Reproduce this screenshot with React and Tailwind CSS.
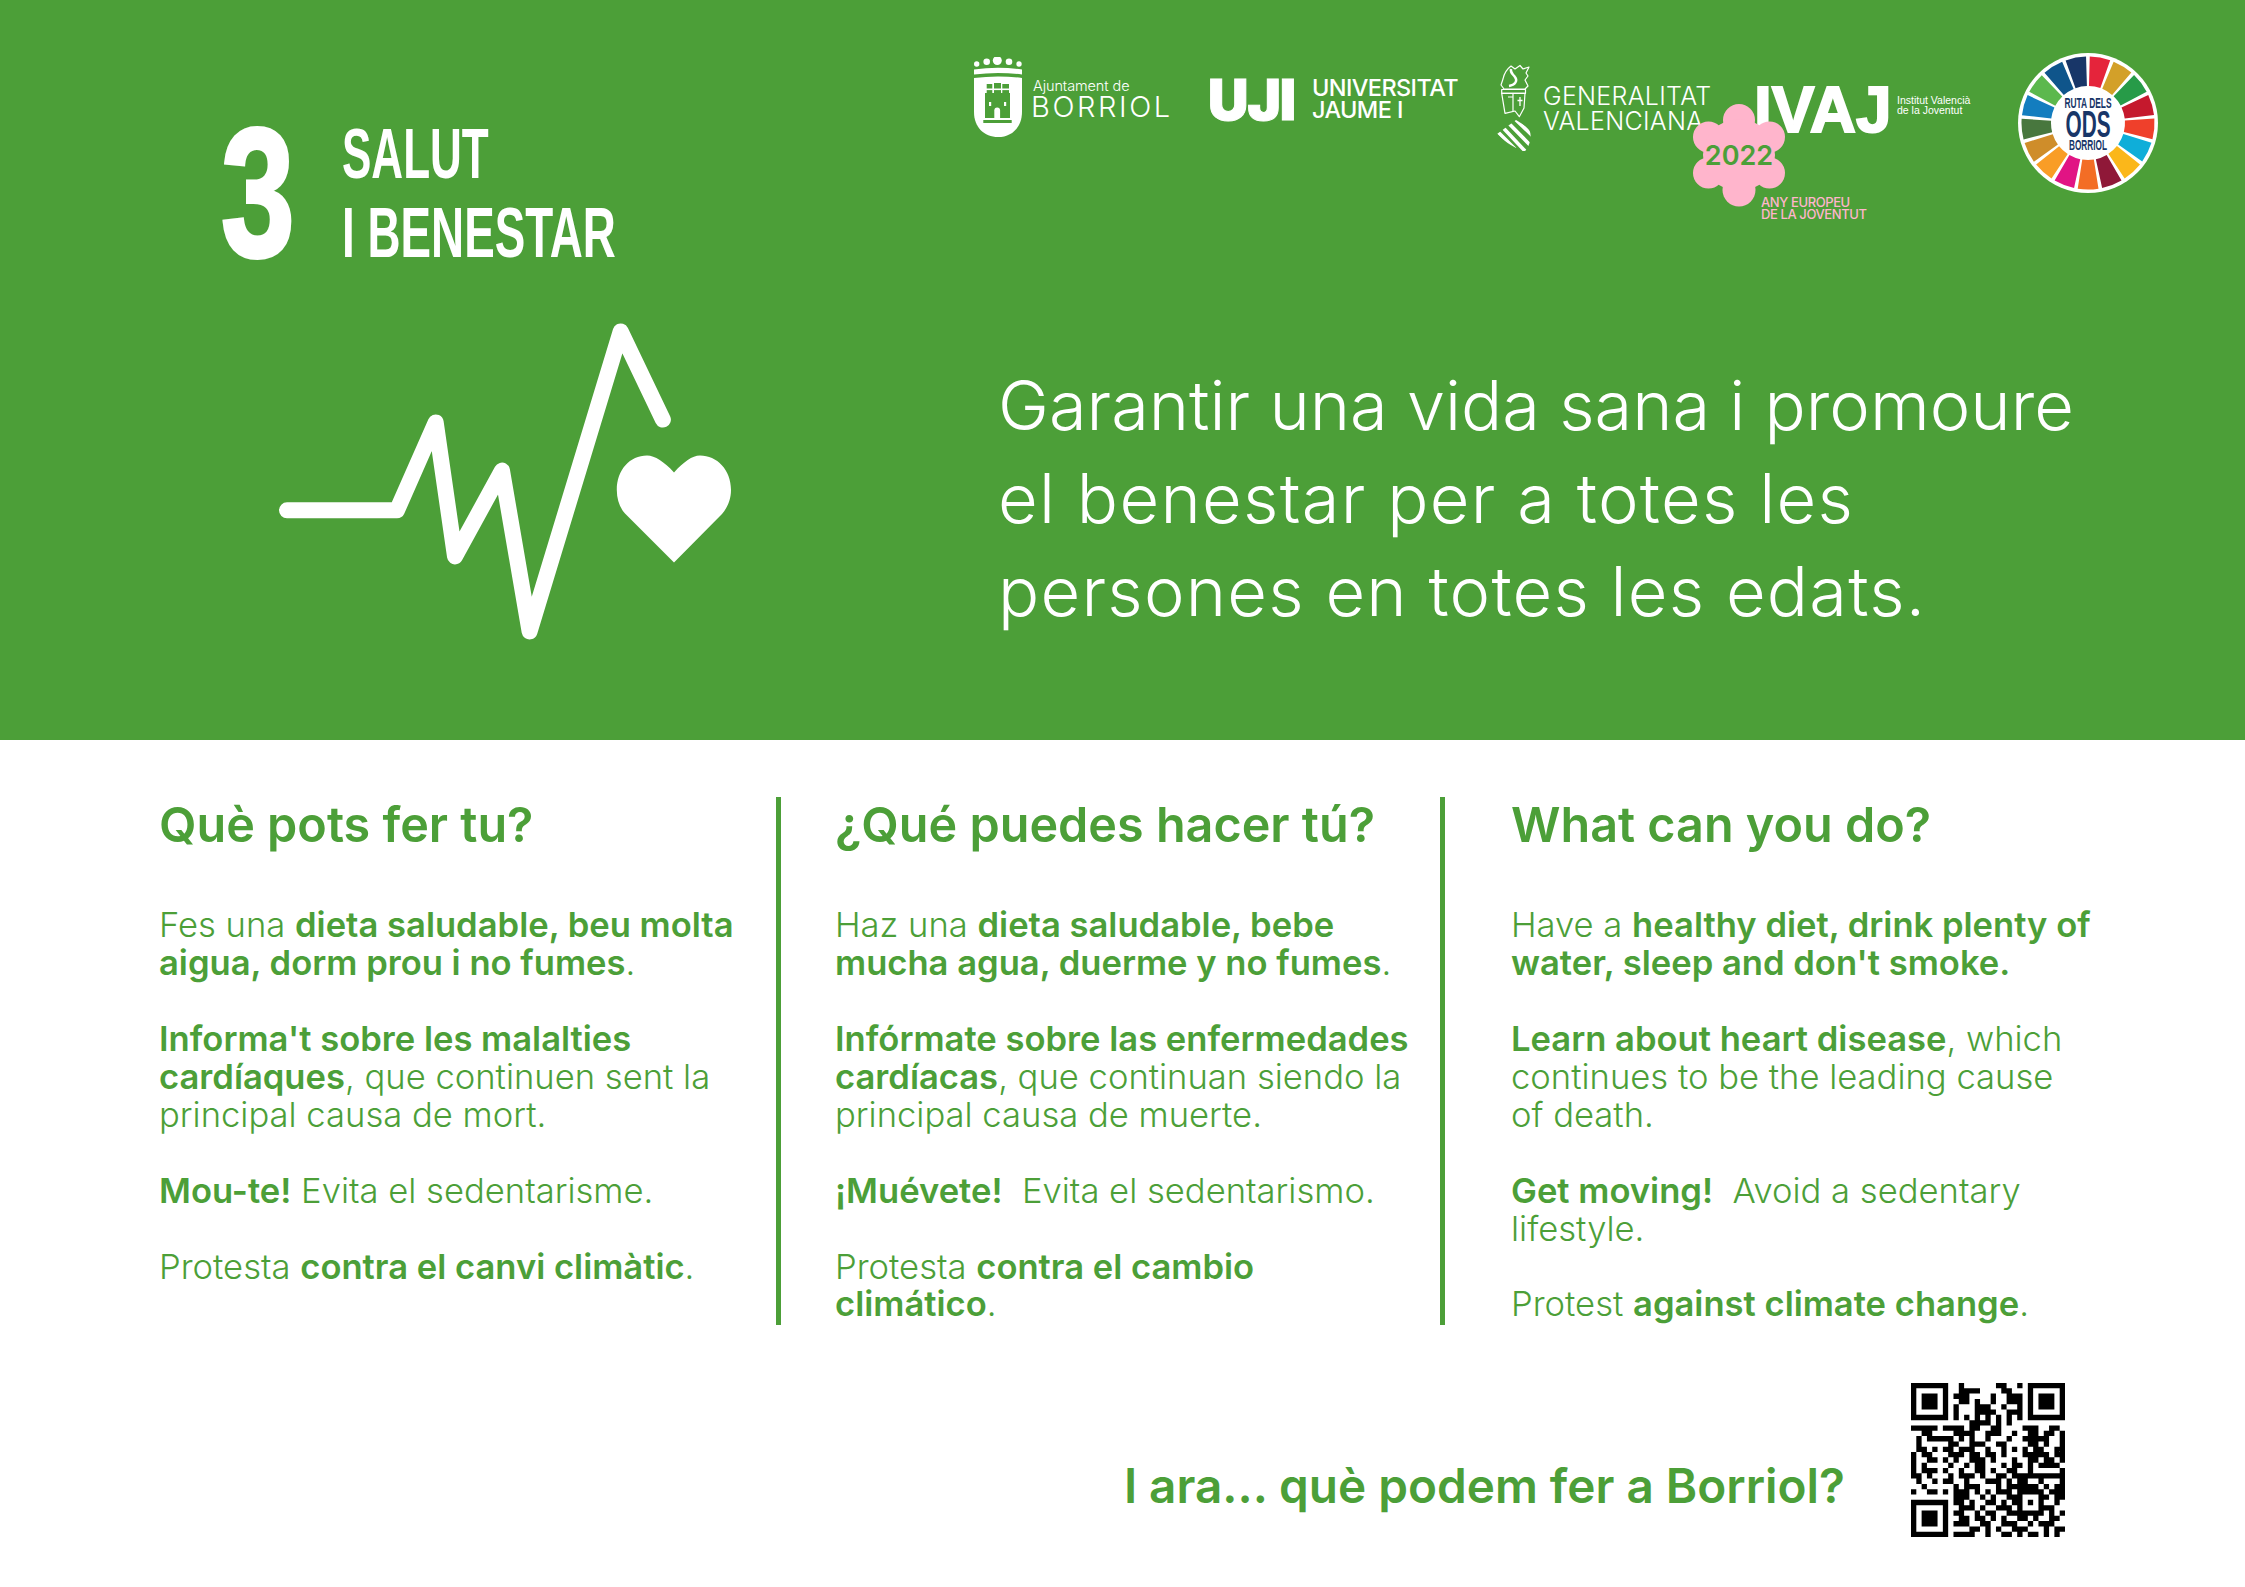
import React from 'react';

const SDG_COLORS = ['#E5243B', '#D3A029', '#279B48', '#C5192D', '#EF402B', '#0FAED9', '#FBB71A', '#8F1838', '#F36D25', '#E11484', '#F99D26', '#CF8D2A', '#48773E', '#137DBF', '#5CB84D', '#0F558B', '#183668'];

const segmentPath = (i) => {
    const cx = 70, cy = 70, r1 = 37, r2 = 66.5;
    const a0 = ((1.5 + (360 / 17) * i - 90) * Math.PI) / 180;
    const a1 = ((1.5 + (360 / 17) * i + 18 - 90) * Math.PI) / 180;
    const p = (r, a) => `${(cx + r * Math.cos(a)).toFixed(2)} ${(cy + r * Math.sin(a)).toFixed(2)}`;
    return `M${p(r1, a0)} L${p(r2, a0)} A${r2} ${r2} 0 0 1 ${p(r2, a1)} L${p(r1, a1)} A${r1} ${r1} 0 0 0 ${p(r1, a0)} Z`;
};

const QR_ROWS = [
    '1111111 0 0100000011001 0 1111111',
    '1000001 0 0111100001100 0 1000001',
    '1011101 0 1110000100111 0 1011101',
    '1011101 0 0110100100111 0 1011101',
    '1011101 0 1000111001001 0 1011101',
    '1000001 0 1000111100111 0 1000001',
    '1111111 0 1010101010101 0 1111111',
    '00000000 0001111010100 00000000',
    '11111 01111 01100 11000 01110 0110',
    '00110 00011 11001 11001 00110 1101',
    '01011 11101 01001 00010 01111 1001',
    '01000 00110 01110 01100 00110 1001',
    '01101 01101 11001 00101 01011 0011',
    '10110 00111 01101 10100 01111 1011',
    '10011 01010 01110 10001 00110 1101',
    '10100 00100 10110 00101 10101 1110',
    '10111 01001 00110 10011 00100 0001',
    '11010 00101 11010 01101 11111 1111',
    '01001 01100 10001 11010 11001 0001',
    '00100 00010 11100 01011 11110 1011',
    '10011 01011 10101 01110 11111 0111',
    '00000 00011 10010 10011 10001 1011',
    '11111 11011 01001 10101 10101 0010',
    '10000 01001 11010 01110 10001 1100',
    '10111 01011 00101 10011 11111 0101',
    '10111 01001 10110 10100 11010 0110',
    '10111 01011 10011 00111 00101 1100',
    '10000 01000 01101 01001 11000 1011',
    '11111 11011 11001 00110 10110 1010',
];

const qrPath = QR_ROWS.map((row, y) =>
    row.replace(/ /g, '').split('').map((c, x) => (c === '1' ? `M${x} ${y}h1v1h-1z` : '')).join('')
).join('');

const BorriolCrest = () => (
    <svg width="52" height="81" viewBox="0 0 52 81" className="shrink-0">
        <g fill="#fff">
            <circle cx="4.7" cy="7" r="2.7" />
            <circle cx="14.7" cy="4.7" r="3.3" />
            <circle cx="25.3" cy="3.5" r="4.5" />
            <circle cx="37" cy="4.7" r="3.3" />
            <circle cx="47" cy="7" r="2.7" />
            <path d="M2 12.5 Q26 9 50 12.5 V17.5 Q26 14.5 2 17.5 Z" />
            <path d="M2 21 Q26 18 50 21 V55 C50 70 40 80 26 80 C12 80 2 70 2 55 Z" />
        </g>
        <g fill="#4c9f38">
            <path d="M14.7 27h5.6v9h1.7v-10h7v10h1.3v-9h6.7v9h1v25h-25v-25h1.7z" />
            <rect x="11.3" y="63" width="28.4" height="3" />
        </g>
        <g fill="#fff">
            <rect x="14" y="31.5" width="23" height="1.6" />
            <path d="M22.3 61v-7.5a2.9 2.9 0 0 1 5.8 0v7.5z" />
            <rect x="17" y="45" width="2.2" height="4" />
            <rect x="32" y="45" width="2.2" height="4" />
        </g>
    </svg>
);

const GeneralitatCrest = () => (
    <svg width="36" height="90" viewBox="0 0 36 90" className="shrink-0">
        <defs>
            <clipPath id="stripes-clip">
                <path d="M19 56 L30 63 C35 68 35 76 29 87 L25 87 C14 82 6 76 0 70 Z" />
            </clipPath>
        </defs>
        <g fill="none" stroke="#fff" strokeWidth="1.2" strokeLinejoin="round">
            <path d="M6 15 C7 10 10 5 14 2 L18 5 L23 1.5 L26 5 L32 3 L29 9 L31 12 L28 16 L31 22 L28 25 H7 L4 21 Z" />
            <path d="M4.7 25.5 H28.5 V29.3 H4.7 Z" />
            <path d="M4.7 29.3 H28 L27 44 L22.3 52.7 L18 47 L8 49.3 Z" />
            <path d="M16 29.3 V47 M11 33 H16" />
        </g>
        <path d="M12 22 C18 21 21 17 18 13 C16 10 13 9 14 5" fill="none" stroke="#fff" strokeWidth="2.4" />
        <path d="M23 33 V42 M20.5 36.5 H25.5" stroke="#fff" strokeWidth="1.3" />
        <g clipPath="url(#stripes-clip)" stroke="#fff" strokeWidth="3.6">
            <path d="M17 54 L38 74 M10.5 58 L33 81 M4.5 62 L28 87 M-2 65 L18 85" />
        </g>
    </svg>
);

const EcgIcon = () => (
    <svg width="460" height="320" viewBox="279 320 460 320" className="block">
        <polyline
            points="287,509.3 397,509.3 435.7,421.4 455,555.4 502,469.6 529.6,630.4 620.7,330.4 662.9,418.6"
            fill="none"
            stroke="#fff"
            strokeWidth="16"
            strokeLinecap="round"
            strokeLinejoin="round"
        />
        <path
            d="M674 471.4 C664 461 655 454.6 647 454.6 C630 454.6 616.8 469 616.8 489 C616.8 499 620 507 625 512.5 L674 561.4 L722 513 C727 507 731 499 731 489 C731 469 717 454.6 700 454.6 C692 454.6 684 461 674 471.4 Z"
            fill="#fff"
        />
    </svg>
);

const OdsWheel = () => (
    <svg width="140" height="140" viewBox="0 0 140 140" className="shrink-0">
        <circle cx="70" cy="70" r="70" fill="#fff" />
        {SDG_COLORS.map((color, i) => (
            <path key={color} d={segmentPath(i)} fill={color} />
        ))}
        <g fill="#183668" fontFamily="'Liberation Sans', sans-serif" fontWeight="700" textAnchor="middle">
            <text x="70" y="55" fontSize="14" textLength="47" lengthAdjust="spacingAndGlyphs">RUTA DELS</text>
            <text x="70" y="84" fontSize="36" textLength="45" lengthAdjust="spacingAndGlyphs">ODS</text>
            <text x="70" y="97" fontSize="14" textLength="38" lengthAdjust="spacingAndGlyphs">BORRIOL</text>
        </g>
    </svg>
);

const Flower = () => (
    <div className="absolute left-[721px] top-[104px] w-[92px] h-[103px] flex items-center justify-center">
        <svg width="92" height="103" viewBox="0 0 92 103" className="absolute inset-0">
            <g fill="#ffb5cc">
                <circle cx="46" cy="16" r="16" />
                <circle cx="46" cy="86" r="16.5" />
                <circle cx="15.5" cy="33" r="15.5" />
                <circle cx="15.5" cy="69" r="15.5" />
                <circle cx="76.5" cy="33" r="15.5" />
                <circle cx="76.5" cy="69" r="15.5" />
                <circle cx="46" cy="51" r="36" />
            </g>
        </svg>
        <span className="relative text-[27px] font-semibold text-[#4c9f38] leading-none font-['Inter',sans-serif]">2022</span>
    </div>
);

const Column = ({ title, children, className }) => (
    <div className={className}>
        <h2 className="text-[48.5px] leading-[56px] font-semibold mb-[53px] whitespace-nowrap">{title}</h2>
        <div className="text-[34.6px] leading-[37.95px] font-light space-y-[37.95px] whitespace-nowrap">{children}</div>
    </div>
);

const B = ({ children }) => <span className="font-semibold">{children}</span>;

export default function App() {
    return (
        <div className="w-[2245px] h-[1587px] bg-white overflow-hidden font-['Inter',sans-serif] text-[#4c9f38]">
            {/* Green banner */}
            <div className="h-[740px] bg-[#4c9f38] flex text-white">
                <div className="w-[972px] shrink-0 pl-[221px] pt-[126px]">
                    <div className="flex font-['Liberation_Sans',sans-serif] font-bold">
                        <div className="w-[121px] h-[132px]">
                            <span className="block text-[184px] leading-[132px] origin-left scale-x-[0.72] [-webkit-text-stroke:4px_white]">3</span>
                        </div>
                        <div className="-mt-[12px] h-[146px] text-[71px] leading-[79px] whitespace-nowrap">
                            <div className="origin-left scale-x-[0.62]">SALUT</div>
                            <div className="origin-left scale-x-[0.645]">I BENESTAR</div>
                        </div>
                    </div>
                    <div className="mt-[61px] ml-[58px]">
                        <EcgIcon />
                    </div>
                </div>

                <div className="flex-1">
                    <div className="relative h-[220px] pt-[57px] flex items-start">
                        <BorriolCrest />
                        <div className="ml-[7px] mt-[21px] w-[140px] font-light whitespace-nowrap">
                            <div className="text-[14.5px] leading-[16px] pl-[2px] tracking-[-0.1px]">Ajuntament de</div>
                            <div className="text-[29px] leading-[26px] tracking-[2.6px]">BORRIOL</div>
                        </div>
                        <div className="ml-[37px] mt-[15px] w-[91px] font-black text-[56px] leading-[56px] [-webkit-text-stroke:1px_white] tracking-[-1px] whitespace-nowrap">UJI</div>
                        <div className="ml-[13px] mt-[20px] w-[145px] text-[23.5px] leading-[22px] font-medium tracking-[-0.6px] whitespace-nowrap">
                            <div>UNIVERSITAT</div>
                            <div>JAUME I</div>
                        </div>
                        <div className="ml-[40px] mt-[7px]">
                            <GeneralitatCrest />
                        </div>
                        <div className="ml-[10px] mt-[27px] w-[168px] text-[25px] leading-[25px] font-light tracking-[0.3px] whitespace-nowrap">
                            <div>GENERALITAT</div>
                            <div>VALENCIANA</div>
                        </div>
                        <div className="ml-[43px] mt-[23px] w-[137px] font-['Liberation_Sans',sans-serif] font-bold text-[64px] leading-[60px] [-webkit-text-stroke:2px_white] whitespace-nowrap">IVAJ</div>
                        <div className="ml-[6px] mt-[38px] font-['Liberation_Sans',sans-serif] text-[10.5px] leading-[10px] whitespace-nowrap">
                            <div>Institut Valencià</div>
                            <div>de la Joventut</div>
                        </div>
                        <div className="absolute left-[1046px] top-[53px]">
                            <OdsWheel />
                        </div>
                        <Flower />
                        <div className="absolute left-[789px] top-[197px] text-[#ffb5cc] text-[13px] leading-[11.5px] font-medium tracking-[-0.4px] whitespace-nowrap">
                            <div>ANY EUROPEU</div>
                            <div>DE LA JOVENTUT</div>
                        </div>
                    </div>
                    <div className="ml-[26px] mt-[139px] text-[68.5px] leading-[93px] font-light whitespace-nowrap">
                        <div>Garantir una vida sana i promoure</div>
                        <div className="tracking-[1.3px]">el benestar per a totes les</div>
                        <div className="tracking-[1.25px]">persones en totes les edats.</div>
                    </div>
                </div>
            </div>

            {/* Three language columns */}
            <div className="flex pt-[57px] pl-[159px] h-[585px]">
                <Column title="Què pots fer tu?" className="w-[617px]">
                    <p>Fes una <B>dieta saludable, beu molta<br />aigua, dorm prou i no fumes</B>.</p>
                    <p><B>Informa't sobre les malalties<br />cardíaques</B>, que continuen sent la<br />principal causa de mort.</p>
                    <p><B>Mou-te!</B> Evita el sedentarisme.</p>
                    <p>Protesta <B>contra el canvi climàtic</B>.</p>
                </Column>
                <Column title="¿Qué puedes hacer tú?" className="w-[664px] h-[528px] border-l-[5px] border-[#4c9f38] pl-[54px]">
                    <p>Haz una <B>dieta saludable, bebe<br />mucha agua, duerme y no fumes</B>.</p>
                    <p><B>Infórmate sobre las enfermedades<br />cardíacas</B>, que continuan siendo la<br />principal causa de muerte.</p>
                    <p><B>¡Muévete!</B>&nbsp; Evita el sedentarismo.</p>
                    <p>Protesta <B>contra el cambio<br />climático</B>.</p>
                </Column>
                <Column title="What can you do?" className="h-[528px] border-l-[5px] border-[#4c9f38] pl-[66px]">
                    <p>Have a <B>healthy diet, drink plenty of<br />water, sleep and don't smoke.</B></p>
                    <p><B>Learn about heart disease</B>, which<br />continues to be the leading cause<br />of death.</p>
                    <p><B>Get moving!</B>&nbsp; Avoid a sedentary<br />lifestyle.</p>
                    <p>Protest <B>against climate change</B>.</p>
                </Column>
            </div>

            {/* Footer with QR */}
            <div className="flex justify-end items-start pr-[180px] pt-[58px]">
                <div className="mt-[75px] text-[47.7px] leading-[56px] font-semibold whitespace-nowrap">I ara... què podem fer a Borriol?</div>
                <svg width="154" height="154" viewBox="0 0 29 29" className="ml-[66px] shrink-0">
                    <path d={qrPath} fill="#000" />
                </svg>
            </div>
        </div>
    );
}
